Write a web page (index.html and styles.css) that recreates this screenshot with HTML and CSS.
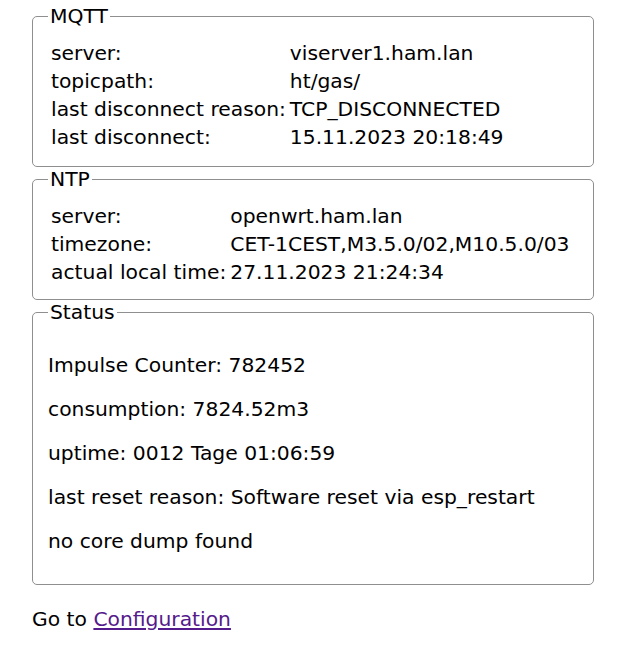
FILE: index.html
```html
<!DOCTYPE html>
<html>
<head>
<meta charset="utf-8">
<title>Status</title>
<link rel="stylesheet" href="styles.css">
</head>
<body>
<div class="page">
  <fieldset class="box">
    <legend>MQTT</legend>
    <table class="info">
      <tr><td>server:</td><td>viserver1.ham.lan</td></tr>
      <tr><td>topicpath:</td><td>ht/gas/</td></tr>
      <tr><td>last disconnect reason:</td><td>TCP_DISCONNECTED</td></tr>
      <tr><td>last disconnect:</td><td>15.11.2023 20:18:49</td></tr>
    </table>
  </fieldset>
  <fieldset class="box">
    <legend>NTP</legend>
    <table class="info">
      <tr><td>server:</td><td>openwrt.ham.lan</td></tr>
      <tr><td>timezone:</td><td>CET-1CEST,M3.5.0/02,M10.5.0/03</td></tr>
      <tr><td>actual local time:</td><td>27.11.2023 21:24:34</td></tr>
    </table>
  </fieldset>
  <fieldset class="box status">
    <legend>Status</legend>
    <p>Impulse Counter: 782452</p>
    <p>consumption: 7824.52m3</p>
    <p>uptime: 0012 Tage 01:06:59</p>
    <p>last reset reason: Software reset via esp_restart</p>
    <p>no core dump found</p>
  </fieldset>
  <p class="nav">Go to <a href="#">Configuration</a></p>
</div>
</body>
</html>
```
FILE: styles.css
```css
html, body {
  margin: 0;
  padding: 0;
  background: #ffffff;
}
body {
  font-family: "DejaVu Sans", Verdana, sans-serif;
  font-size: 20.3px;
  line-height: 24px;
  color: #000000;
}
.page {
  padding: 4px 35px 0 32px;
}
.box {
  margin: 0;
  padding: 10px 15px 12px 15px;
  border: 1px solid #8f8f8f;
  border-radius: 5px;
}
.box:first-child {
  padding-bottom: 14px;
}
.box legend {
  padding: 0 2px;
}
.box.status {
  padding: 9px 15px 11px 15px;
}
.info {
  border-spacing: 2px;
}
.info td {
  padding: 1px;
  white-space: nowrap;
}
.box p {
  margin: 20px 0;
}
.nav {
  margin: 22px 0;
}
.nav a {
  color: #551a8b;
}
```
